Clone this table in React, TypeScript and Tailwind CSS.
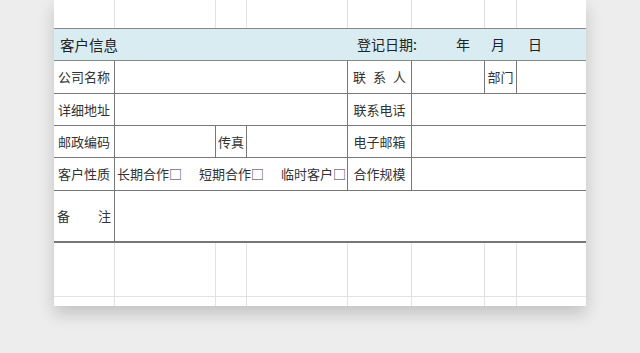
const cols = [60, 101, 31, 101, 64, 73, 32, 70]

const font = { fontFamily: '"Noto Sans CJK SC", "Noto Sans", sans-serif' }

// blank spreadsheet rows with light gridlines
const GridRow = ({ h, bottom }: { h: string; bottom?: boolean }) => (
  <div className={`flex ${h} ${bottom ? 'border-b border-[#e2e2e2]' : ''}`}>
    {cols.map((w, i) => (
      <div
        key={i}
        style={{ width: w }}
        className={`shrink-0 ${i > 0 ? 'border-l border-[#e2e2e2]' : ''}`}
      />
    ))}
  </div>
)

const Label = ({ w, text, first }: { w: string; text: string; first?: boolean }) => (
  <div className={`${w} shrink-0 flex items-center justify-center whitespace-nowrap ${first ? '' : 'border-l border-[#777]'}`}>
    {text}
  </div>
)

const Blank = ({ w }: { w: string }) => <div className={`${w} shrink-0 border-l border-[#777]`} />

const App = () => {
  return (
    <div className="w-[640px] h-[353px] bg-[#ededed] overflow-hidden" style={font}>
      <div className="ml-[54px] w-[532px] bg-white shadow-[0_8px_16px_rgba(0,0,0,0.18)] text-[13px] text-[#333]">
        <GridRow h="h-[28px]" />

        {/* HEADER */}
        <div className="h-[33px] flex items-center bg-[#d9ecf2] border-y border-[#888] text-[14px] text-[#222] whitespace-nowrap">
          <span className="ml-[6px] text-[14.5px]">客户信息</span>
          <span className="ml-[239px]">登记日期:</span>
          <span className="ml-[39px]">年</span>
          <span className="ml-[21px]">月</span>
          <span className="ml-[23px]">日</span>
        </div>

        {/* ROW 1 */}
        <div className="h-[33px] flex border-b border-[#777]">
          <Label w="w-[60px]" text="公司名称" first />
          <Blank w="w-[233px]" />
          <div className="w-[64px] shrink-0 flex items-center justify-center gap-[7px] border-l border-[#777]">
            <span>联</span>
            <span>系</span>
            <span>人</span>
          </div>
          <Blank w="w-[73px]" />
          <Label w="w-[32px]" text="部门" />
          <Blank w="w-[70px]" />
        </div>

        {/* ROW 2 */}
        <div className="h-[32px] flex border-b border-[#777]">
          <Label w="w-[60px]" text="详细地址" first />
          <Blank w="w-[233px]" />
          <Label w="w-[64px]" text="联系电话" />
          <Blank w="w-[175px]" />
        </div>

        {/* ROW 3 */}
        <div className="h-[32px] flex border-b border-[#777]">
          <Label w="w-[60px]" text="邮政编码" first />
          <Blank w="w-[101px]" />
          <Label w="w-[31px]" text="传真" />
          <Blank w="w-[101px]" />
          <Label w="w-[64px]" text="电子邮箱" />
          <Blank w="w-[175px]" />
        </div>

        {/* ROW 4 */}
        <div className="h-[33px] flex border-b border-[#777]">
          <Label w="w-[60px]" text="客户性质" first />
          <div className="w-[233px] shrink-0 border-l border-[#777] flex items-center gap-[17px] pl-[2px] whitespace-nowrap overflow-hidden">
            <span>长期合作□</span>
            <span>短期合作□</span>
            <span>临时客户□</span>
          </div>
          <Label w="w-[64px]" text="合作规模" />
          <Blank w="w-[175px]" />
        </div>

        {/* REMARKS */}
        <div className="h-[52px] flex border-b-2 border-[#777]">
          <div className="w-[60px] shrink-0 flex items-center justify-between px-[3px]">
            <span>备</span>
            <span>注</span>
          </div>
          <Blank w="w-[472px]" />
        </div>

        <GridRow h="h-[54px]" bottom />
        <GridRow h="h-[9px]" />
      </div>
    </div>
  )
}

export default App
